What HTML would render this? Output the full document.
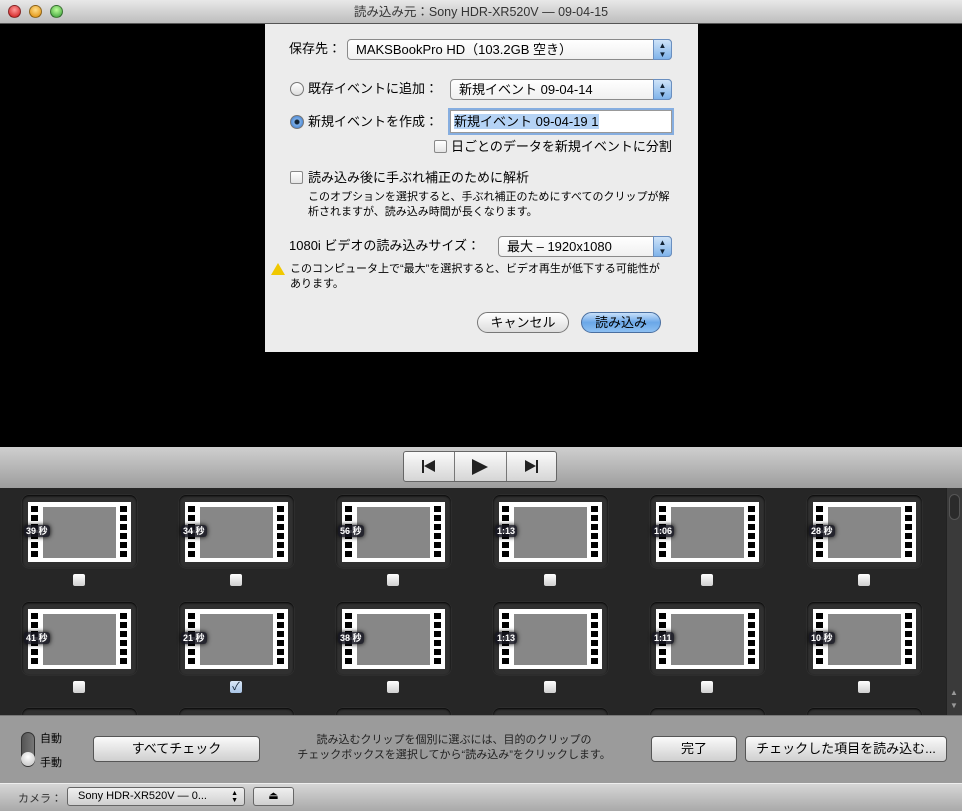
<!DOCTYPE html>
<html><head><meta charset="utf-8"><style>
*{box-sizing:border-box;margin:0;padding:0}
body{width:962px;height:811px;overflow:hidden;position:relative;background:#000;font-family:"Liberation Sans","Noto Sans CJK JP",sans-serif;font-size:13px;color:#000}
.a{position:absolute;white-space:nowrap}
#dlg .a{line-height:16px}
#title{left:0;top:0;width:962px;height:24px;background:linear-gradient(#e8e8e8,#bdbdbd);border-bottom:1px solid #555;text-align:center;line-height:24px;font-size:12.5px;color:#333}
.tl{position:absolute;top:5px;width:13px;height:13px;border-radius:50%;border:1px solid rgba(0,0,0,.4)}
#dlg{left:265px;top:24px;width:433px;height:328px;background:#ececec}
.pop{position:absolute;height:21px;border:1px solid #8a8a8a;border-radius:4px;background:linear-gradient(#fff,#f0f0f0);padding-left:8px;line-height:19px;font-size:13px}
.pop .ar{position:absolute;right:-1px;top:-1px;width:19px;height:21px;border-radius:0 4px 4px 0;background:linear-gradient(#cfe3f8,#7fb3ea);border:1px solid #6a8fc0;color:#123;font-size:8px;text-align:center;line-height:9px;padding-top:1px}
.rad{position:absolute;width:14px;height:14px;border-radius:50%;border:1px solid #777;background:linear-gradient(#fff,#ddd)}
.chk{position:absolute;width:13px;height:13px;border-radius:2px;border:1px solid #888;background:linear-gradient(#fff,#e4e4e4)}
.btn{position:absolute;height:21px;border:1px solid #777;border-radius:11px;background:linear-gradient(#fff,#ddd);text-align:center;line-height:19px !important;font-size:13px}
#trans{left:0;top:447px;width:962px;height:41px;background:linear-gradient(#cfcfcf,#9d9d9d)}
#grid{left:0;top:488px;width:962px;height:227px;background:#262626;overflow:hidden}
.c{position:absolute;width:115px;height:73px;border-radius:7px;background:#303030;box-shadow:0 1px 2px #000 inset,0 0 1px #555}
.w{position:absolute;left:6px;top:7px;width:103px;height:60px;background:#fff}
.w:before,.w:after{content:"";position:absolute;top:4px;width:7px;height:52px;background:repeating-linear-gradient(#000 0 6px,#fff 6px 9px)}
.w:before{left:3px}.w:after{right:4px}
.g{position:absolute;left:15px;top:5px;width:73px;height:51px;background:#878787}
.l{position:absolute;left:2px;top:30px;font-size:9px;font-weight:bold;color:#fff;background:rgba(20,20,30,.85);padding:0 2px;border-radius:3px;line-height:12px;box-shadow:0 0 5px #000}
.k{position:absolute;width:12px;height:12px;border-radius:2px;background:linear-gradient(#fff,#cfcfcf)}
#bot{left:0;top:715px;width:962px;height:68px;background:#9b9b9b;border-top:1px solid #777}
#stat{left:0;top:783px;width:962px;height:28px;background:linear-gradient(#d6d6d6,#a9a9a9);border-top:1px solid #eee}
.rb{position:absolute;height:26px;border:1px solid #555;border-radius:4px;background:linear-gradient(#fafafa,#cfcfcf);text-align:center;line-height:24px;font-size:13px}
</style></head><body>
<div id="title" class="a">読み込み元：Sony HDR-XR520V — 09-04-15
<div class="tl" style="left:8px;background:radial-gradient(circle at 50% 35%,#f99,#c11)"></div>
<div class="tl" style="left:29px;background:radial-gradient(circle at 50% 35%,#fd8,#d80)"></div>
<div class="tl" style="left:50px;background:radial-gradient(circle at 50% 35%,#bf9,#393)"></div>
</div>

<div id="dlg" class="a">
<div class="a" style="left:24px;top:17px">保存先：</div>
<div class="pop" style="left:82px;top:15px;width:325px">MAKSBookPro HD（103.2GB 空き）<div class="ar">▲<br>▼</div></div>
<div class="rad" style="left:25px;top:58px"></div>
<div class="a" style="left:43px;top:57px">既存イベントに追加：</div>
<div class="pop" style="left:185px;top:55px;width:222px">新規イベント 09-04-14<div class="ar">▲<br>▼</div></div>
<div class="rad" style="left:25px;top:91px;background:radial-gradient(#123 0 2px,#7fb0e8 3px,#2a6ec8)"></div>
<div class="a" style="left:43px;top:90px">新規イベントを作成：</div>
<div class="a" style="left:185px;top:86px;width:222px;height:23px;border:1px solid #999;box-shadow:0 0 0 2px #86aee0;background:#fff;padding:2px 3px"><span style="background:#b5d3f5;line-height:17px">新規イベント 09-04-19 1</span></div>
<div class="chk" style="left:169px;top:116px"></div>
<div class="a" style="left:186px;top:115px">日ごとのデータを新規イベントに分割</div>
<div class="chk" style="left:25px;top:147px"></div>
<div class="a" style="left:43px;top:146px">読み込み後に手ぶれ補正のために解析</div>
<div class="a" style="left:43px;top:166px;font-size:11px;line-height:15px !important">このオプションを選択すると、手ぶれ補正のためにすべてのクリップが解<br>析されますが、読み込み時間が長くなります。</div>
<div class="a" style="left:24px;top:214px">1080i ビデオの読み込みサイズ：</div>
<div class="pop" style="left:233px;top:212px;width:174px">最大 – 1920x1080<div class="ar">▲<br>▼</div></div>
<div class="a" style="left:6px;top:239px;width:0;height:0;border-left:7px solid transparent;border-right:7px solid transparent;border-bottom:12px solid #f0c800"></div>
<div class="a" style="left:25px;top:238px;font-size:11px;line-height:15px !important">このコンピュータ上で“最大”を選択すると、ビデオ再生が低下する可能性が<br>あります。</div>
<div class="btn" style="left:212px;top:288px;width:92px">キャンセル</div>
<div class="btn" style="left:316px;top:288px;width:80px;background:linear-gradient(#c8e0fa,#6aa7e8 50%,#8dc0f2);border-color:#4a6fa0">読み込み</div>
</div>

<div id="trans" class="a">
<div class="a" style="left:403px;top:4px;width:154px;height:31px;border:1px solid #666;border-radius:3px;background:linear-gradient(#fafafa,#d5d5d5)">
<div class="a" style="left:50px;top:0;width:1px;height:29px;background:#777"></div>
<div class="a" style="left:102px;top:0;width:1px;height:29px;background:#777"></div>
<div class="a" style="left:18px;top:8px;width:2px;height:13px;background:#222"></div>
<div class="a" style="left:20px;top:8px;border-top:6.5px solid transparent;border-bottom:6.5px solid transparent;border-right:11px solid #222"></div>
<div class="a" style="left:68px;top:7px;border-top:8px solid transparent;border-bottom:8px solid transparent;border-left:16px solid #222"></div>
<div class="a" style="left:121px;top:8px;border-top:6.5px solid transparent;border-bottom:6.5px solid transparent;border-left:11px solid #222"></div>
<div class="a" style="left:132px;top:8px;width:2px;height:13px;background:#222"></div>
</div></div>

<div id="grid" class="a">
<div class="c" style="left:22px;top:7px"><div class="w"><div class="g"></div></div><span class="l">39 秒</span></div><div class="k" style="left:73px;top:86px"></div>
<div class="c" style="left:179px;top:7px"><div class="w"><div class="g"></div></div><span class="l">34 秒</span></div><div class="k" style="left:230px;top:86px"></div>
<div class="c" style="left:336px;top:7px"><div class="w"><div class="g"></div></div><span class="l">56 秒</span></div><div class="k" style="left:387px;top:86px"></div>
<div class="c" style="left:493px;top:7px"><div class="w"><div class="g"></div></div><span class="l">1:13</span></div><div class="k" style="left:544px;top:86px"></div>
<div class="c" style="left:650px;top:7px"><div class="w"><div class="g"></div></div><span class="l">1:06</span></div><div class="k" style="left:701px;top:86px"></div>
<div class="c" style="left:807px;top:7px"><div class="w"><div class="g"></div></div><span class="l">28 秒</span></div><div class="k" style="left:858px;top:86px"></div>
<div class="c" style="left:22px;top:114px"><div class="w"><div class="g"></div></div><span class="l">41 秒</span></div><div class="k" style="left:73px;top:193px"></div>
<div class="c" style="left:179px;top:114px"><div class="w"><div class="g"></div></div><span class="l">21 秒</span></div><div class="k" style="left:230px;top:193px;background:linear-gradient(#dbe8f8,#a9c4e6);font-size:11px;line-height:12px;text-align:center;color:#123">✓</div>
<div class="c" style="left:336px;top:114px"><div class="w"><div class="g"></div></div><span class="l">38 秒</span></div><div class="k" style="left:387px;top:193px"></div>
<div class="c" style="left:493px;top:114px"><div class="w"><div class="g"></div></div><span class="l">1:13</span></div><div class="k" style="left:544px;top:193px"></div>
<div class="c" style="left:650px;top:114px"><div class="w"><div class="g"></div></div><span class="l">1:11</span></div><div class="k" style="left:701px;top:193px"></div>
<div class="c" style="left:807px;top:114px"><div class="w"><div class="g"></div></div><span class="l">10 秒</span></div><div class="k" style="left:858px;top:193px"></div>
<div class="c" style="left:22px;top:220px"><div class="w"></div></div>
<div class="c" style="left:179px;top:220px"><div class="w"></div></div>
<div class="c" style="left:336px;top:220px"><div class="w"></div></div>
<div class="c" style="left:493px;top:220px"><div class="w"></div></div>
<div class="c" style="left:650px;top:220px"><div class="w"></div></div>
<div class="c" style="left:807px;top:220px"><div class="w"></div></div>
<div class="a" style="left:946px;top:0;width:16px;height:227px;background:#3a3a3a;border-left:1px solid #222">
<div class="a" style="left:2px;top:6px;width:11px;height:26px;border-radius:6px;background:#2b2b2b;border:1px solid #555"></div>
<div class="a" style="left:3px;top:198px;color:#999;font-size:8px;line-height:13px">▲<br>▼</div>
</div>
</div>

<div id="bot" class="a">
<div class="a" style="left:21px;top:16px;width:14px;height:35px;border-radius:7px;background:linear-gradient(90deg,#555,#777);border:1px solid #333"></div>
<div class="a" style="left:21px;top:36px;width:14px;height:14px;border-radius:50%;background:radial-gradient(circle at 50% 35%,#fff,#bbb)"></div>
<div class="a" style="left:40px;top:14px;font-size:11px">自動</div>
<div class="a" style="left:40px;top:38px;font-size:11px">手動</div>
<div class="rb" style="left:93px;top:20px;width:167px">すべてチェック</div>
<div class="a" style="left:280px;top:17px;width:348px;text-align:center;font-size:11px;line-height:15px;color:#222">読み込むクリップを個別に選ぶには、目的のクリップの<br>チェックボックスを選択してから“読み込み”をクリックします。</div>
<div class="rb" style="left:651px;top:20px;width:86px">完了</div>
<div class="rb" style="left:745px;top:20px;width:202px">チェックした項目を読み込む...</div>
</div>

<div id="stat" class="a">
<div class="a" style="left:18px;top:6px;font-size:11px;color:#333">カメラ：</div>
<div class="a" style="left:67px;top:3px;width:178px;height:19px;border:1px solid #666;border-radius:3px;background:linear-gradient(#f0f0f0,#cfcfcf);font-size:11px;line-height:17px;padding-left:10px">Sony HDR-XR520V — 0...<span style="position:absolute;right:6px;font-size:7px;line-height:7px;top:2px">▲<br>▼</span></div>
<div class="a" style="left:253px;top:3px;width:41px;height:19px;border:1px solid #666;border-radius:3px;background:linear-gradient(#f0f0f0,#cfcfcf);text-align:center;font-size:11px;line-height:17px">⏏</div>
</div>
</body></html>
